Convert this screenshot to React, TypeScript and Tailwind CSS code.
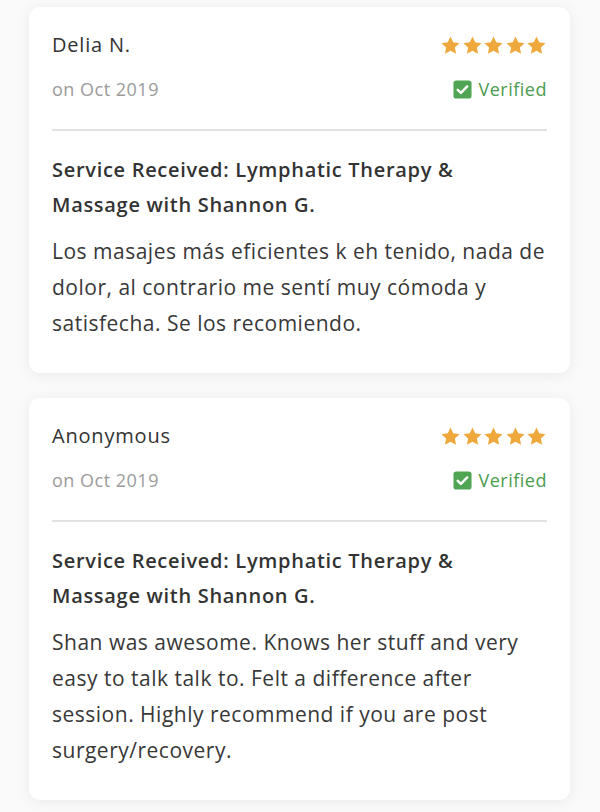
const reviews = [
  {
    name: "Delia N.",
    date: "on Oct 2019",
    service: "Service Received: Lymphatic Therapy & Massage with Shannon G.",
    body: "Los masajes más eficientes k eh tenido, nada de dolor, al contrario me sentí muy cómoda y satisfecha. Se los recomiendo.",
  },
  {
    name: "Anonymous",
    date: "on Oct 2019",
    service: "Service Received: Lymphatic Therapy & Massage with Shannon G.",
    body: "Shan was awesome. Knows her stuff and very easy to talk talk to. Felt a difference after session. Highly recommend if you are post surgery/recovery.",
  },
];

function Star() {
  return (
    <svg viewBox="0 0 24 24" className="w-[21px] h-[21px]" fill="#efa83c">
      <path d="M12 1.8l3.1 6.6 7.2.9-5.3 5 1.4 7.1L12 17.9l-6.4 3.5 1.4-7.1-5.3-5 7.2-.9z" />
    </svg>
  );
}

function Check() {
  return (
    <svg viewBox="0 0 20 20" className="w-[19px] h-[19px]">
      <rect x="0.5" y="0.5" width="19" height="19" rx="3" fill="#4fa553" />
      <path d="M5 10.3l3.3 3.2L15 6.8" stroke="#fff" strokeWidth="2.6" fill="none" strokeLinecap="round" strokeLinejoin="round" />
    </svg>
  );
}

function ReviewCard({ r }: { r: (typeof reviews)[number] }) {
  return (
    <div className="bg-white rounded-[11px] shadow-[0_2px_14px_rgba(0,0,0,0.07)] px-[23px] pt-[24px] pb-[32px]">
      <div className="flex justify-between items-center h-[28px]">
        <span className="text-[20px] tracking-[0.8px] text-[#333]">{r.name}</span>
        <div className="flex gap-[0.5px]">
          {[0, 1, 2, 3, 4].map((i) => (
            <Star key={i} />
          ))}
        </div>
      </div>
      <div className="flex justify-between items-center h-[28px] mt-[16px]">
        <span className="text-[18px] tracking-[0.5px] text-[#9b9b9b]">{r.date}</span>
        <span className="flex items-center gap-[7px] text-[18px] tracking-[0.5px] text-[#4a9c4e]">
          <Check />
          Verified
        </span>
      </div>
      <div className="border-t-2 border-[#e2e2e2] mt-[26px]" />
      <p className="mt-[21px] text-[20px] leading-[35px] tracking-[0.7px] font-semibold text-[#333] pr-[40px]">{r.service}</p>
      <p className="mt-[11px] text-[21px] leading-[36px] tracking-[0.5px] text-[#383838]">{r.body}</p>
    </div>
  );
}

export default function App() {
  return (
    <main className="min-h-screen bg-[#fafafa] px-[29px] pt-[7px] pb-[12px] font-['Open_Sans',sans-serif]">
      <div className="flex flex-col gap-[25px] w-[541px]">
        {reviews.map((r, i) => (
          <ReviewCard key={i} r={r} />
        ))}
      </div>
    </main>
  );
}
